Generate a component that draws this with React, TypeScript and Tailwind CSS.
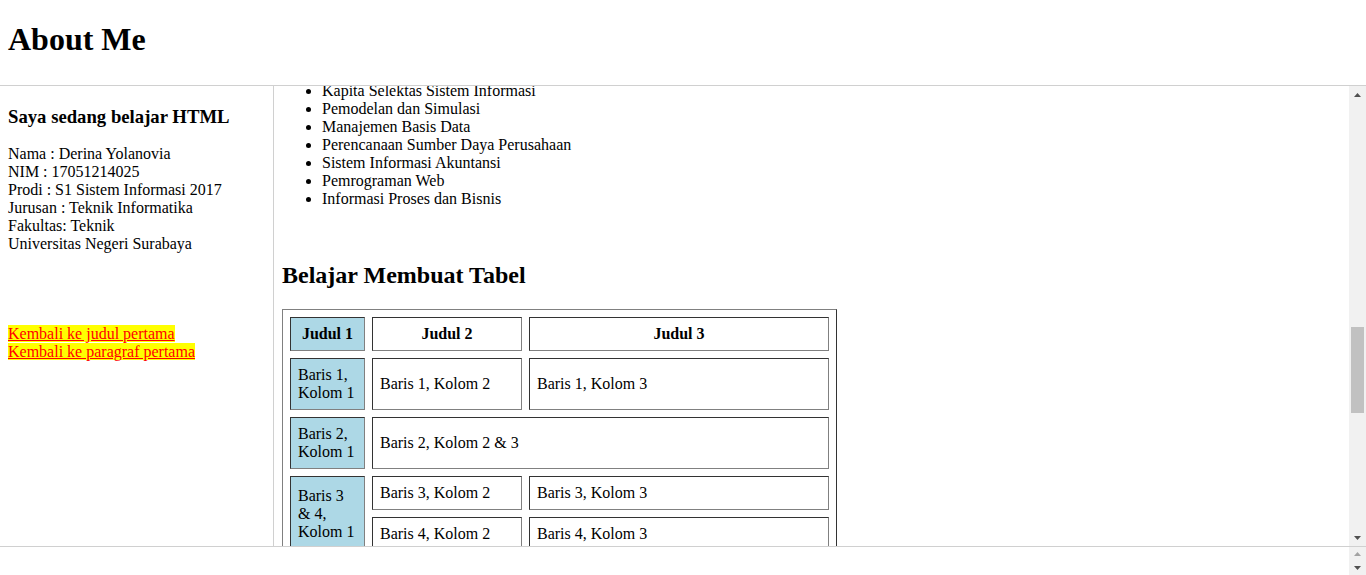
import React from "react";

const Up = ({ color }: { color: string }) => (
  <svg width="7" height="4" viewBox="0 0 7 4" className="block">
    <polygon points="0,4 7,4 3.5,0" fill={color} />
  </svg>
);
const Down = ({ color }: { color: string }) => (
  <svg width="7" height="4" viewBox="0 0 7 4" className="block">
    <polygon points="0,0 7,0 3.5,4" fill={color} />
  </svg>
);

const cellBorder =
  "border border-t-[#333] border-l-[#333] border-b-[#808080] border-r-[#808080]";

export default function App() {
  const courses = [
    "Kapita Selektas Sistem Informasi",
    "Pemodelan dan Simulasi",
    "Manajemen Basis Data",
    "Perencanaan Sumber Daya Perusahaan",
    "Sistem Informasi Akuntansi",
    "Pemrograman Web",
    "Informasi Proses dan Bisnis",
  ];
  return (
    <div className="w-[1366px] h-[575px] overflow-hidden flex flex-col bg-white text-black font-['Liberation_Serif',serif] text-[16px] leading-[18px]">
      {/* header frame */}
      <div className="h-[86px] border-b border-[#d0d0d0] px-[8px] shrink-0">
        <h1 className="mt-[21px] text-[32px] font-bold leading-[37px]">About Me</h1>
      </div>

      {/* middle */}
      <div className="flex h-[460px] shrink-0">
        {/* left frame */}
        <div className="w-[274px] border-r border-[#d0d0d0] px-[8px] shrink-0">
          <h3 className="mt-[20px] mb-[17px] text-[18.72px] font-bold leading-[22px]">
            Saya sedang belajar HTML
          </h3>
          <p>
            Nama : Derina Yolanovia
            <br />
            NIM : 17051214025
            <br />
            Prodi : S1 Sistem Informasi 2017
            <br />
            Jurusan : Teknik Informatika
            <br />
            Fakultas: Teknik
            <br />
            Universitas Negeri Surabaya
          </p>
          <p className="mt-[72px]">
            <a href="#" className="bg-[#ffff00] text-[#ff0000] underline">
              Kembali ke judul pertama
            </a>
            <br />
            <a href="#" className="bg-[#ffff00] text-[#ff0000] underline">
              Kembali ke paragraf pertama
            </a>
          </p>
        </div>

        {/* main frame */}
        <div className="flex-1 overflow-hidden">
          <div className="mt-[-4px] px-[8px]">
            <ul className="list-disc pl-[40px]">
              {courses.map((c) => (
                <li key={c}>{c}</li>
              ))}
            </ul>
            <h2 className="mt-[53px] mb-[20px] text-[24px] font-bold leading-[28px]">
              Belajar Membuat Tabel
            </h2>
            <table className="table-fixed w-[555px] border-separate border-spacing-[7px] border border-t-[#808080] border-l-[#808080] border-b-[#333] border-r-[#333]">
              <tbody>
                <tr>
                  <th className={`w-[75px] p-[7px] bg-[#add8e6] text-center font-bold ${cellBorder}`}>
                    Judul 1
                  </th>
                  <th className={`w-[150px] p-[7px] text-center font-bold ${cellBorder}`}>Judul 2</th>
                  <th className={`w-[300px] p-[7px] text-center font-bold ${cellBorder}`}>Judul 3</th>
                </tr>
                <tr>
                  <td className={`p-[7px] bg-[#add8e6] align-middle ${cellBorder}`}>Baris 1, Kolom 1</td>
                  <td className={`p-[7px] align-middle ${cellBorder}`}>Baris 1, Kolom 2</td>
                  <td className={`p-[7px] align-middle ${cellBorder}`}>Baris 1, Kolom 3</td>
                </tr>
                <tr>
                  <td className={`p-[7px] bg-[#add8e6] align-middle ${cellBorder}`}>Baris 2, Kolom 1</td>
                  <td colSpan={2} className={`p-[7px] align-middle ${cellBorder}`}>
                    Baris 2, Kolom 2 &amp; 3
                  </td>
                </tr>
                <tr>
                  <td rowSpan={2} className={`p-[7px] bg-[#add8e6] align-middle ${cellBorder}`}>
                    Baris 3 &amp; 4, Kolom 1
                  </td>
                  <td className={`p-[7px] align-middle ${cellBorder}`}>Baris 3, Kolom 2</td>
                  <td className={`p-[7px] align-middle ${cellBorder}`}>Baris 3, Kolom 3</td>
                </tr>
                <tr>
                  <td className={`p-[7px] align-middle ${cellBorder}`}>Baris 4, Kolom 2</td>
                  <td className={`p-[7px] align-middle ${cellBorder}`}>Baris 4, Kolom 3</td>
                </tr>
              </tbody>
            </table>
          </div>
        </div>

        {/* main scrollbar */}
        <div className="w-[17px] bg-[#f1f1f1] flex flex-col shrink-0">
          <div className="h-[17px] flex items-center justify-center pt-[1px]">
            <Up color="#505050" />
          </div>
          <div className="flex-1 flex flex-col px-[2px]">
            <div className="h-[224px]" />
            <div className="h-[86px] bg-[#c1c1c1]" />
          </div>
          <div className="h-[17px] flex items-center justify-center">
            <Down color="#505050" />
          </div>
        </div>
      </div>

      {/* bottom frame */}
      <div className="h-[29px] border-t border-[#d0d0d0] flex shrink-0">
        <div className="flex-1" />
        <div className="w-[17px] bg-[#f1f1f1] flex flex-col">
          <div className="h-[14px] flex items-center justify-center">
            <Up color="#a3a3a3" />
          </div>
          <div className="h-[14px] flex items-center justify-center">
            <Down color="#505050" />
          </div>
        </div>
      </div>
    </div>
  );
}
